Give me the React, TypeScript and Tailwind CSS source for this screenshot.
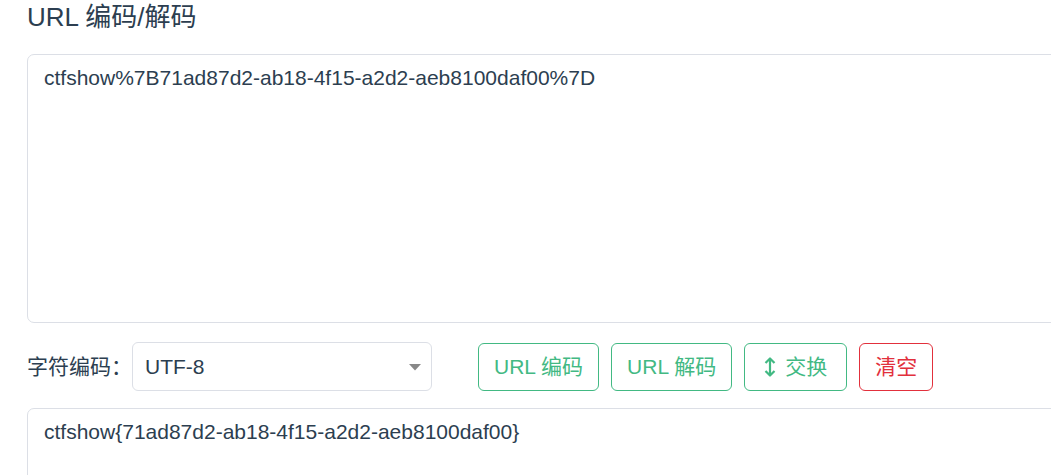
import React from "react";

const font = { fontFamily: '"Liberation Sans", "Noto Sans CJK SC", sans-serif' };

function SwapIcon() {
  return (
    <svg width="12" height="20" viewBox="0 0 12 20" className="mr-[9px]" aria-hidden>
      <path d="M6 2 L6 18" stroke="currentColor" strokeWidth="2.2" fill="none" />
      <path d="M1.5 6 L6 1.5 L10.5 6" stroke="currentColor" strokeWidth="2.2" fill="none" strokeLinejoin="round" />
      <path d="M1.5 14 L6 18.5 L10.5 14" stroke="currentColor" strokeWidth="2.2" fill="none" strokeLinejoin="round" />
    </svg>
  );
}

export default function App() {
  return (
    <div className="w-full h-[475px] overflow-hidden bg-white text-[#2c3e50]" style={font}>
      <div className="w-[1100px] pl-[27px]">
        <h1 className="text-[26px] leading-[31px] pt-[2px] font-normal">URL 编码/解码</h1>
        <textarea
          className="block mt-[21px] w-full h-[269px] border border-[#dcdfe6] rounded-[7px] px-[16px] py-[7px] text-[21px] leading-[1.5] resize-none outline-none text-[#2c3e50]"
          style={font}
          defaultValue="ctfshow%7B71ad87d2-ab18-4f15-a2d2-aeb8100daf00%7D"
        />
        <div className="flex items-center mt-[19px] h-[49px]">
          <span className="text-[21px] w-[105px]">字符编码：</span>
          <div className="relative w-[300px] h-[49px] border border-[#dcdfe6] rounded-[6px] flex items-center pl-[12px] text-[21px]">
            UTF-8
            <svg width="12" height="7" viewBox="0 0 12 7" className="absolute right-[10px] top-[21px]">
              <path d="M0 0 L12 0 L6 6.5 Z" fill="#888" />
            </svg>
          </div>
          <div className="flex gap-[12px] ml-[46px]">
            <button className="h-[48px] px-[15px] border border-[#42b983] text-[#42b983] rounded-[6px] text-[21px] bg-white flex items-center" style={font}>URL 编码</button>
            <button className="h-[48px] px-[15px] border border-[#42b983] text-[#42b983] rounded-[6px] text-[21px] bg-white flex items-center" style={font}>URL 解码</button>
            <button className="h-[48px] px-[19px] border border-[#42b983] text-[#42b983] rounded-[6px] text-[21px] bg-white flex items-center" style={font}><SwapIcon />交换</button>
            <button className="h-[48px] px-[15px] border border-[#e2303c] text-[#e2303c] rounded-[6px] text-[21px] bg-white flex items-center" style={font}>清空</button>
          </div>
        </div>
        <textarea
          className="block mt-[17px] w-full h-[120px] border border-[#dcdfe6] rounded-[7px] px-[16px] py-[7px] text-[21px] leading-[1.5] resize-none outline-none text-[#2c3e50]"
          style={font}
          defaultValue="ctfshow{71ad87d2-ab18-4f15-a2d2-aeb8100daf00}"
        />
      </div>
    </div>
  );
}
